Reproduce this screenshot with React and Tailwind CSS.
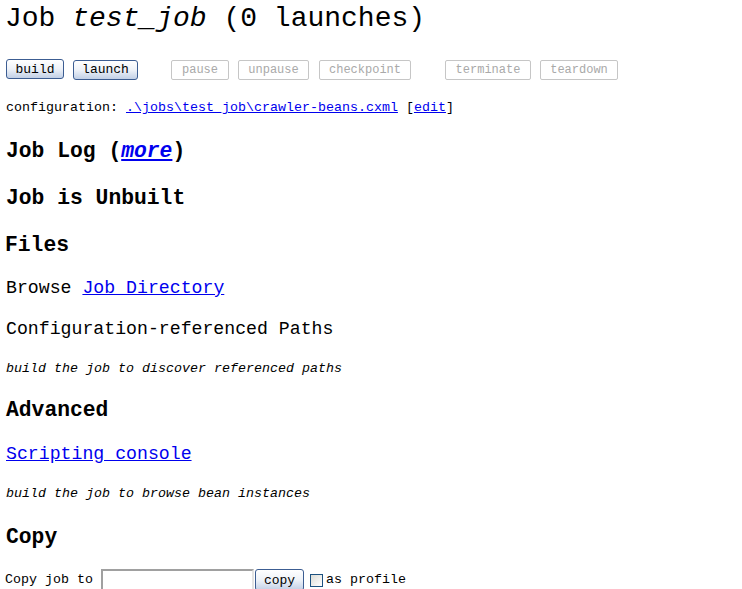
const mono = { fontFamily: '"Liberation Mono", "DejaVu Sans Mono", monospace' };

function ActiveButton({ label, w }) {
  return (
    <button
      className={`h-[20px] ${w} rounded-[3px] border border-[#3c5d92] bg-gradient-to-b from-white via-[#eef2f8] to-[#c2d0e6] text-[13px] leading-none text-black`}
    >
      {label}
    </button>
  );
}

function DisabledButton({ label, w }) {
  return (
    <button
      disabled
      className={`h-[20px] ${w} rounded-[2px] border border-[#c6c6c6] bg-white text-[12px] leading-none text-[#a9a9a9]`}
    >
      {label}
    </button>
  );
}

function Heading({ children, mt }) {
  return (
    <div className={`${mt} h-[30px] flex items-center text-[21.33px] font-bold leading-none`}>
      {children}
    </div>
  );
}

export default function App() {
  return (
    <div className="w-[742px] h-[589px] overflow-hidden bg-white text-black pl-[6px]" style={mono}>
      <div className="h-[36px] flex items-center text-[28px] leading-none -ml-[1px] pt-[2px]">
        Job&nbsp;<i>test_job</i>&nbsp;(0 launches)
      </div>

      <div className="mt-[21px] flex items-center">
        <ActiveButton label="build" w="w-[58px]" />
        <div className="ml-[9px]"><ActiveButton label="launch" w="w-[65px]" /></div>
        <div className="ml-[33px]"><DisabledButton label="pause" w="w-[58px]" /></div>
        <div className="ml-[9px]"><DisabledButton label="unpause" w="w-[71px]" /></div>
        <div className="ml-[10px]"><DisabledButton label="checkpoint" w="w-[92px]" /></div>
        <div className="ml-[34px]"><DisabledButton label="terminate" w="w-[86px]" /></div>
        <div className="ml-[9px]"><DisabledButton label="teardown" w="w-[78px]" /></div>
      </div>

      <div className="mt-[17px] h-[20px] flex items-center text-[13.33px] leading-none whitespace-pre">
        configuration: <a href="#" className="text-[#0000ee] underline">.\jobs\test_job\crawler-beans.cxml</a> [<a href="#" className="text-[#0000ee] underline">edit</a>]
      </div>

      <Heading mt="mt-[19px]">
        <span className="whitespace-pre">Job Log (</span>
        <a href="#" className="italic text-[#0000ee] underline">more</a>
        <span>)</span>
      </Heading>

      <Heading mt="mt-[17px]">Job is Unbuilt</Heading>

      <Heading mt="mt-[17px]"><span className="-ml-[1px]">Files</span></Heading>

      <div className="mt-[15px] h-[24px] flex items-center text-[18.2px] leading-none whitespace-pre">
        Browse <a href="#" className="text-[#0000ee] underline">Job Directory</a>
      </div>

      <div className="mt-[17px] h-[24px] flex items-center text-[18.2px] leading-none font-medium">
        Configuration-referenced Paths
      </div>

      <div className="mt-[18px] h-[20px] flex items-center text-[13.33px] italic leading-none">
        build the job to discover referenced paths
      </div>

      <Heading mt="mt-[17px]">Advanced</Heading>

      <div className="mt-[16px] h-[24px] flex items-center text-[18.2px] leading-none">
        <a href="#" className="text-[#0000ee] underline">Scripting console</a>
      </div>

      <div className="mt-[18px] h-[20px] flex items-center text-[13.33px] italic leading-none">
        build the job to browse bean instances
      </div>

      <Heading mt="mt-[19px]">Copy</Heading>

      <div className="mt-[15px] h-[24px] flex items-center text-[13.33px] leading-none whitespace-pre">
        <span className="-ml-[1px]">Copy job to </span>
        <input
          type="text"
          className="h-[22px] w-[153px] border-2 border-[#a0a0a0] border-r-[#e4e4e4] border-b-[#e4e4e4] bg-white outline-none"
        />
        <button className="ml-[1px] h-[22px] w-[49px] rounded-[3px] border border-[#3c5d92] bg-gradient-to-b from-white via-[#eef2f8] to-[#c2d0e6] text-[13px] leading-none">
          copy
        </button>
        <span className="ml-[6px] h-[13px] w-[13px] border border-[#1c5180] bg-gradient-to-br from-[#dcdcd6] to-white" />
        <span className="ml-[3px]">as profile</span>
      </div>
    </div>
  );
}
